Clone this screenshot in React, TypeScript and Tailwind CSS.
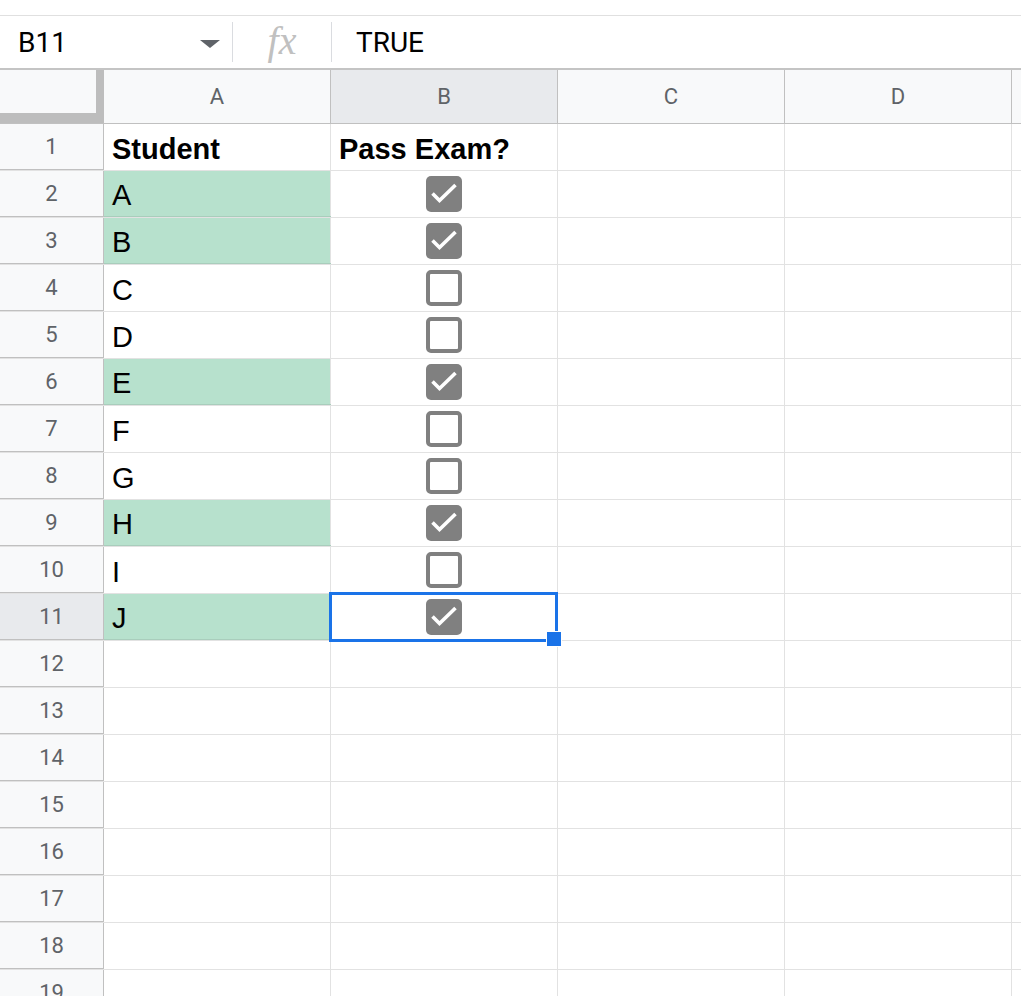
import React from "react";

type Row = { name: string; pass: boolean };

const rows: Row[] = [
  { name: "A", pass: true },
  { name: "B", pass: true },
  { name: "C", pass: false },
  { name: "D", pass: false },
  { name: "E", pass: true },
  { name: "F", pass: false },
  { name: "G", pass: false },
  { name: "H", pass: true },
  { name: "I", pass: false },
  { name: "J", pass: true },
];

// column E is only a sliver at the right edge, no label visible
const cols = ["A", "B", "C", "D", ""];

function Checkbox({ checked }: { checked: boolean }) {
  if (!checked) {
    return (
      <div className="w-[36px] h-[36px] rounded-[5px] border-[4px] border-[#808080] bg-white" />
    );
  }
  return (
    <div className="w-[36px] h-[36px] rounded-[5px] bg-[#808080] flex items-center justify-center">
      <svg width="36" height="36" viewBox="0 0 36 36">
        <path
          d="M6.5 17.5 L13.5 24.5 L29.5 9"
          fill="none"
          stroke="white"
          strokeWidth="3.6"
        />
      </svg>
    </div>
  );
}

function RowHeader({ n, active }: { n: number; active?: boolean }) {
  return (
    <div
      className={`w-[104px] shrink-0 h-full flex items-center justify-center border-r border-[#c0c0c0] font-['Roboto'] text-[22px] text-[#5f6368] ${
        active ? "bg-[#e8eaed]" : "bg-[#f8f9fa]"
      }`}
    >
      {n}
    </div>
  );
}

function Cell({
  children,
  green,
  center,
  bold,
  selected,
}: {
  children?: React.ReactNode;
  green?: boolean;
  center?: boolean;
  bold?: boolean;
  selected?: boolean;
}) {
  return (
    <div
      className={`relative w-[227px] shrink-0 h-full border-r border-[#e2e2e2] flex ${
        center ? "items-center justify-center" : "items-end pl-[8px] pb-[4px]"
      } ${green ? "bg-[#b7e1cd]" : "bg-white"} ${bold ? "font-bold" : ""} ${
        selected ? "z-10" : ""
      }`}
    >
      <span className="leading-[33px]">{children}</span>
      {selected && (
        <>
          <div className="absolute top-[-2px] left-[-2px] right-[-1px] bottom-[-2px] border-[3px] border-[#1a73e8] pointer-events-none" />
          <div className="absolute right-[-5px] bottom-[-7px] w-[16px] h-[16px] bg-[#1a73e8] border border-white" />
        </>
      )}
    </div>
  );
}

export default function App() {
  const totalRows = 19;

  return (
    <div className="w-[1021px] h-[996px] overflow-hidden bg-white font-['Liberation_Sans',Arial,sans-serif] text-[29px] text-black">
      <div className="h-[15px]" />
      {/* formula bar */}
      <div className="h-[55px] flex items-stretch border-t border-b-2 border-t-[#e0e0e0] border-b-[#c4c4c4] font-['Roboto'] text-[28px]">
        <div className="w-[232px] shrink-0 flex items-center pl-[18px] pr-[12px]">
          <span className="flex-1 mt-[2px]">B11</span>
          <span className="w-0 h-0 border-l-[10px] border-r-[10px] border-t-[8px] border-l-transparent border-r-transparent border-t-[#5f6368] mt-[4px]" />
        </div>
        <div className="w-px h-[40px] self-center bg-[#dadce0]" />
        <div className="w-[98px] shrink-0 flex items-center justify-center">
          <span className="font-['Liberation_Serif',serif] italic text-[40px] text-[#c0c0c0] leading-none -mt-[2px]">
            fx
          </span>
        </div>
        <div className="w-px h-[40px] self-center bg-[#dadce0]" />
        <div className="flex items-center pl-[24px] mt-[2px]">TRUE</div>
      </div>

      {/* column headers */}
      <div className="h-[54px] flex border-b border-[#c0c0c0] font-['Roboto'] text-[22px] text-[#5f6368]">
        <div className="w-[104px] shrink-0 h-full bg-[#f8f9fa] border-r-[8px] border-b-[10px] border-[#bdbdbd]" />
        {cols.map((c, i) => (
          <div
            key={i}
            className={`w-[227px] shrink-0 h-full flex items-center justify-center border-r border-[#c0c0c0] ${
              c === "B" ? "bg-[#e8eaed]" : "bg-[#f8f9fa]"
            }`}
          >
            {c}
          </div>
        ))}
      </div>

      {/* rows */}
      {Array.from({ length: totalRows }, (_, i) => {
        const n = i + 1;
        const data = n >= 2 && n <= 11 ? rows[n - 2] : null;
        const green = !!data?.pass;
        return (
          <div key={n} className="h-[47px] flex border-b border-[#e2e2e2]">
            <div className="h-full flex border-b border-[#c0c0c0] -mb-px">
              <RowHeader n={n} active={n === 11} />
            </div>
            {n === 1 ? (
              <>
                <Cell bold>Student</Cell>
                <Cell bold>Pass Exam?</Cell>
              </>
            ) : data ? (
              <>
                <div className={`h-full flex ${green ? "border-b border-[#a9cdbc] -mb-px" : ""}`}>
                  <Cell green={green}>{data.name}</Cell>
                </div>
                <Cell center selected={n === 11}>
                  <Checkbox checked={data.pass} />
                </Cell>
              </>
            ) : (
              <>
                <Cell />
                <Cell />
              </>
            )}
            <Cell />
            <Cell />
            <Cell />
          </div>
        );
      })}
    </div>
  );
}
